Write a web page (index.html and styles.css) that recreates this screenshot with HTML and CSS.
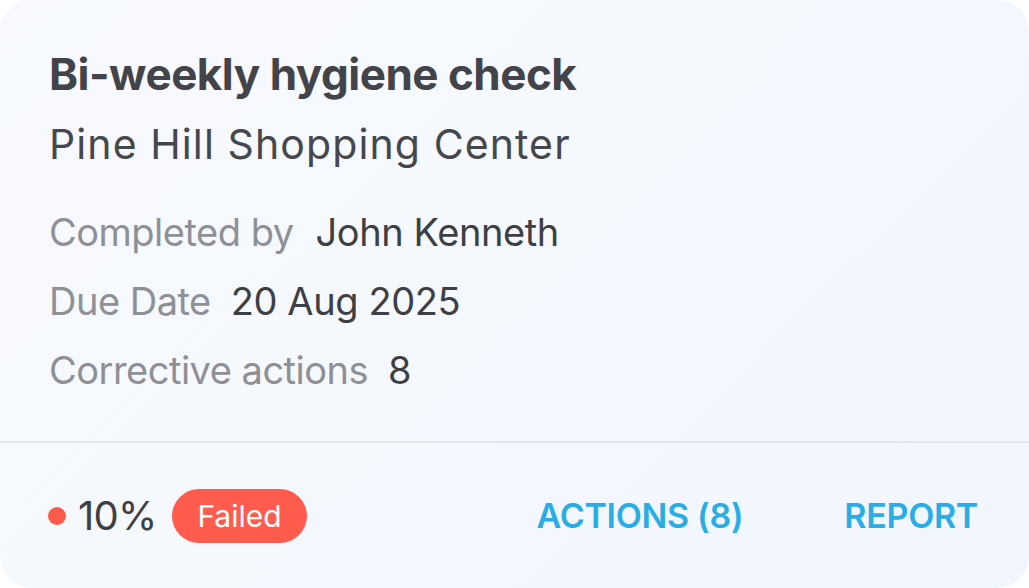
FILE: index.html
```html
<!DOCTYPE html>
<html>
<head>
<meta charset="utf-8">
<link rel="stylesheet" href="styles.css">
</head>
<body>
<div class="card">
  <div class="body">
    <h1 class="title">Bi-weekly hygiene check</h1>
    <div class="site">Pine Hill Shopping Center</div>
    <div class="meta">
      <div class="row"><span class="label">Completed by</span><span class="value gap-lg">John Kenneth</span></div>
      <div class="row"><span class="label">Due Date</span><span class="value">20 Aug 2025</span></div>
      <div class="row"><span class="label">Corrective actions</span><span class="value">8</span></div>
    </div>
  </div>
  <div class="footer">
    <div class="score">
      <span class="dot"></span>
      <span class="pct">10%</span>
      <span class="badge">Failed</span>
    </div>
    <div class="links">
      <span class="link">ACTIONS (8)</span>
      <span class="link">REPORT</span>
    </div>
  </div>
</div>
</body>
</html>
```
FILE: styles.css
```css
html, body {
  margin: 0;
  padding: 0;
  background: #ffffff;
}
body {
  width: 1029px;
  height: 588px;
  font-family: Inter, "Noto Sans", sans-serif;
}
.card {
  box-sizing: border-box;
  width: 1029px;
  height: 588px;
  border-radius: 32px;
  background: linear-gradient(135deg, #f7f9fd 0%, #f4f8fe 60%, #f1f5fc 100%);
  display: flex;
  flex-direction: column;
}
.body {
  padding: 46px 49px 0;
  height: 395px;
  border-bottom: 2px solid #e6e7ec;
}
.title {
  margin: 0;
  font-size: 44px;
  font-weight: 700;
  color: #434449;
  letter-spacing: -0.5px;
  line-height: 56px;
}
.site {
  margin-top: 17px;
  font-size: 41px;
  font-weight: 400;
  color: #45474c;
  letter-spacing: 1.1px;
  line-height: 50px;
}
.meta {
  margin-top: 40px;
  display: flex;
  flex-direction: column;
  gap: 23px;
}
.row {
  display: flex;
  align-items: baseline;
  gap: 20px;
  line-height: 46px;
  font-size: 38px;
}
.label {
  color: #8e9096;
  letter-spacing: -0.5px;
}
.value {
  color: #3d3f44;
  letter-spacing: -0.4px;
}
.gap-lg {
  margin-left: 2px;
}
.footer {
  flex: 1;
  display: flex;
  align-items: center;
  justify-content: space-between;
  padding: 0 51px 0 48px;
}
.score {
  display: flex;
  align-items: center;
}
.dot {
  width: 18px;
  height: 18px;
  border-radius: 50%;
  background: #ff5a4d;
  margin-right: 12px;
}
.pct {
  font-size: 40px;
  color: #3d3f44;
  letter-spacing: -0.8px;
  margin-right: 16px;
}
.badge {
  height: 54px;
  padding: 0 25px;
  border-radius: 27px;
  background: #ff5c4e;
  color: #ffffff;
  font-size: 30px;
  display: flex;
  align-items: center;
}
.links {
  display: flex;
  gap: 101px;
  align-items: center;
}
.link {
  font-size: 34px;
  font-weight: 600;
  color: #2aade4;
  letter-spacing: -0.3px;
}
```
